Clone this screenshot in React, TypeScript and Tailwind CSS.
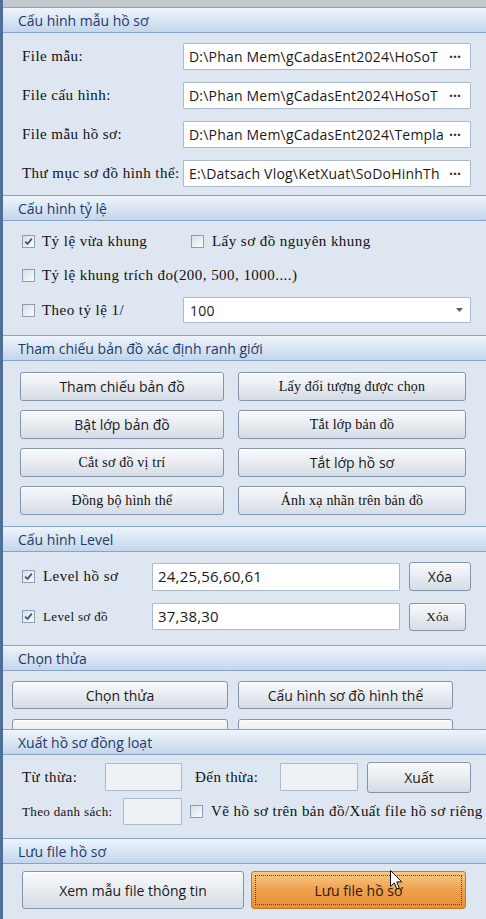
import type { ReactNode } from 'react';
import clsx from 'clsx';

const serif = "font-['Liberation_Serif',serif] text-[15px] tracking-[0.45px] text-[#111]";
const serifSm = "font-['Liberation_Serif',serif] text-[13px] tracking-[0.35px] text-[#111]";
const serifBtn = "font-['Liberation_Serif',serif] text-[14px] tracking-[0.2px] text-[#111]";
const sans = "font-['Open_Sans',sans-serif] text-[14px] text-[#1a1a1a]";
const fieldText = "font-['Open_Sans',sans-serif] text-[14px] tracking-[0.2px] text-[#1a1a1a]";

function Header({ title }: { title: string }) {
  return (
    <div className="flex h-[26px] shrink-0 items-center border-y border-[#88a3c8] bg-linear-to-b from-[#eef4fb] to-[#c4d6ec] pl-[15px] font-['Open_Sans',sans-serif] text-[14px] text-[#1d3a6a]">
      {title}
    </div>
  );
}

function Check({ checked = false }: { checked?: boolean }) {
  return (
    <span className="flex h-[13px] w-[13px] shrink-0 items-center justify-center border border-[#8f9db1] bg-linear-to-br from-[#d9dfe6] to-[#fbfcfd]">
      {checked && (
        <svg viewBox="0 0 9 9" className="h-[9px] w-[9px]">
          <path d="M1.2 4.6 L3.6 7 L7.8 1.6" stroke="#415676" strokeWidth="1.8" fill="none" />
        </svg>
      )}
    </span>
  );
}

function Btn({ children, className, font = sans }: { children?: ReactNode; className?: string; font?: string }) {
  return (
    <div
      className={clsx(
        'flex shrink-0 items-center justify-center whitespace-nowrap rounded-[3px] border border-[#8494aa] bg-linear-to-b from-[#f7f9fb] via-[#e8ecf1] to-[#d5dce5] shadow-[inset_0_1px_0_#ffffff]',
        font,
        className
      )}
    >
      {children}
    </div>
  );
}

function Field({ children, className }: { children?: ReactNode; className?: string }) {
  return (
    <div
      className={clsx(
        'flex shrink-0 items-center overflow-hidden rounded-[1px] border border-[#abb9cb] bg-white',
        className
      )}
    >
      {children}
    </div>
  );
}

function PathField({ value }: { value: string }) {
  return (
    <Field className="h-[27px] w-[288px]">
      <span className={clsx('min-w-0 flex-1 overflow-hidden whitespace-nowrap pl-[5px]', fieldText)}>{value}</span>
      <span className="mr-[3px] w-[24px] shrink-0 text-center font-['Open_Sans',sans-serif] text-[14px] font-bold leading-none text-[#333]">
        ···
      </span>
    </Field>
  );
}

const paths = [
  { label: 'File mẫu:', value: 'D:\\Phan Mem\\gCadasEnt2024\\HoSoT' },
  { label: 'File cấu hình:', value: 'D:\\Phan Mem\\gCadasEnt2024\\HoSoT' },
  { label: 'File mẫu hồ sơ:', value: 'D:\\Phan Mem\\gCadasEnt2024\\Templa' },
  { label: 'Thư mục sơ đồ hình thể:', value: 'E:\\Datsach Vlog\\KetXuat\\SoDoHinhTh' },
];

export default function App() {
  return (
    <div className="relative flex h-[919px] w-[486px] flex-col overflow-hidden border-l-[3px] border-[#4f6e9a] bg-[#dde6f1]">
      <div className="h-[7px] shrink-0 bg-[#c4c9cf]" />

      {/* Cấu hình mẫu hồ sơ */}
      <Header title="Cấu hình mẫu hồ sơ" />
      <div className="flex h-[162px] shrink-0 flex-col gap-[12px] pl-[19px] pt-[10px]">
        {paths.map(p => (
          <div key={p.label} className="flex items-center">
            <span className={clsx('w-[161px] shrink-0 whitespace-nowrap', serif)}>{p.label}</span>
            <PathField value={p.value} />
          </div>
        ))}
      </div>

      {/* Cấu hình tỷ lệ */}
      <Header title="Cấu hình tỷ lệ" />
      <div className="flex h-[114px] shrink-0 flex-col gap-[10px] pl-[19px] pt-[8px]">
        <div className="flex h-[24px] items-center">
          <div className="flex w-[169px] items-center gap-[7px]">
            <Check checked />
            <span className={serif}>Tỷ lệ vừa khung</span>
          </div>
          <div className="flex items-center gap-[8px]">
            <Check />
            <span className={serif}>Lấy sơ đồ nguyên khung</span>
          </div>
        </div>
        <div className="flex h-[24px] items-center gap-[7px]">
          <Check />
          <span className={serif}>Tỷ lệ khung trích đo(200, 500, 1000....)</span>
        </div>
        <div className="flex h-[26px] items-center">
          <div className="flex w-[161px] items-center gap-[7px]">
            <Check />
            <span className={serif}>Theo tỷ lệ 1/</span>
          </div>
          <Field className="h-[26px] w-[288px]">
            <span className={clsx('flex-1 pl-[6px]', fieldText)}>100</span>
            <svg viewBox="0 0 7 4" className="mr-[7px] h-[4px] w-[7px]">
              <path d="M0 0 H7 L3.5 4 Z" fill="#5a5f66" />
            </svg>
          </Field>
        </div>
      </div>

      {/* Tham chiếu bản đồ */}
      <Header title="Tham chiếu bản đồ xác định ranh giới" />
      <div className="grid h-[165px] shrink-0 grid-cols-[204px_228px] content-start gap-x-[14px] gap-y-[9px] pl-[17px] pt-[11px]">
        <Btn className="h-[29px]">Tham chiếu bản đồ</Btn>
        <Btn className="h-[29px]" font={serifBtn}>Lấy đối tượng được chọn</Btn>
        <Btn className="h-[29px]">Bật lớp bản đồ</Btn>
        <Btn className="h-[29px]" font={serifBtn}>Tắt lớp bản đồ</Btn>
        <Btn className="h-[29px]" font={serifBtn}>Cắt sơ đồ vị trí</Btn>
        <Btn className="h-[29px]">Tắt lớp hồ sơ</Btn>
        <Btn className="h-[29px]" font={serifBtn}>Đồng bộ hình thể</Btn>
        <Btn className="h-[29px]" font={serifBtn}>Ánh xạ nhãn trên bản đồ</Btn>
      </div>

      {/* Cấu hình Level */}
      <Header title="Cấu hình Level" />
      <div className="flex h-[93px] shrink-0 flex-col gap-[11px] pl-[19px] pt-[10px]">
        <div className="flex h-[29px] items-center">
          <div className="flex w-[130px] items-center gap-[8px]">
            <Check checked />
            <span className={serif}>Level hồ sơ</span>
          </div>
          <Field className="h-[28px] w-[248px]">
            <span className={clsx('pl-[5px] text-[15px]', fieldText)}>24,25,56,60,61</span>
          </Field>
          <Btn className="ml-[9px] h-[29px] w-[62px]">Xóa</Btn>
        </div>
        <div className="flex h-[29px] items-center">
          <div className="flex w-[130px] items-center gap-[8px]">
            <Check checked />
            <span className={serifSm}>Level sơ đồ</span>
          </div>
          <Field className="h-[27px] w-[248px]">
            <span className={clsx('pl-[5px] text-[15px]', fieldText)}>37,38,30</span>
          </Field>
          <Btn className="ml-[9px] h-[28px] w-[57px]" font={serifSm}>
            Xóa
          </Btn>
        </div>
      </div>

      {/* Chọn thửa */}
      <Header title="Chọn thửa" />
      <div className="grid h-[58px] shrink-0 grid-cols-[216px_215px] content-start gap-x-[10px] gap-y-[10px] overflow-hidden pl-[9px] pt-[10px]">
        <Btn className="h-[28px]">Chọn thửa</Btn>
        <Btn className="h-[28px]">Cấu hình sơ đồ hình thể</Btn>
        <Btn className="h-[28px]" />
        <Btn className="h-[28px]" />
      </div>

      {/* Xuất hồ sơ đồng loạt */}
      <Header title="Xuất hồ sơ đồng loạt" />
      <div className="flex h-[83px] shrink-0 flex-col gap-[5px] pl-[19px] pt-[6px]">
        <div className="flex h-[32px] items-center">
          <span className={clsx('w-[83px] shrink-0', serif)}>Từ thừa:</span>
          <Field className="h-[28px] w-[77px] !bg-[#eef1f5]" />
          <span className={clsx('ml-[13px] w-[85px] shrink-0', serif)}>Đến thừa:</span>
          <Field className="h-[28px] w-[78px] !bg-[#eef1f5]" />
          <Btn className="ml-[9px] h-[31px] w-[104px]">Xuất</Btn>
        </div>
        <div className="flex h-[27px] items-center">
          <span className={clsx('w-[101px] shrink-0 whitespace-nowrap', serifSm)}>Theo danh sách:</span>
          <Field className="h-[27px] w-[59px] !bg-[#eef1f5]" />
          <span className="ml-[8px]">
            <Check />
          </span>
          <span className={clsx('ml-[8px] whitespace-nowrap', serif)}>Vẽ hồ sơ trên bản đồ/Xuất file hồ sơ riêng</span>
        </div>
      </div>

      {/* Lưu file hồ sơ */}
      <Header title="Lưu file hồ sơ" />
      <div className="flex flex-1 gap-[7px] pl-[19px] pt-[7px]">
        <Btn className="h-[38px] w-[222px]">Xem mẫu file thông tin</Btn>
        <div className="flex h-[38px] w-[215px] items-center justify-center rounded-[3px] border border-[#c07a2c] bg-linear-to-b from-[#f9c989] via-[#efa14c] to-[#e88e36] p-[3px]">
          <div className="flex h-full w-full items-center justify-center border border-dotted border-[#6b3f12] font-['Open_Sans',sans-serif] text-[14px] text-[#2e1804]">
            Lưu file hồ sơ
          </div>
        </div>
      </div>

      {/* mouse cursor */}
      <svg viewBox="0 0 13 21" className="absolute left-[387px] top-[870px] h-[21px] w-[13px]">
        <path d="M0.5 0.5 V16.5 L4.3 12.8 L6.8 18.8 L9.2 17.8 L6.7 11.9 H11.8 Z" fill="#ffffff" stroke="#111" strokeWidth="1" strokeLinejoin="round" />
      </svg>
    </div>
  );
}
